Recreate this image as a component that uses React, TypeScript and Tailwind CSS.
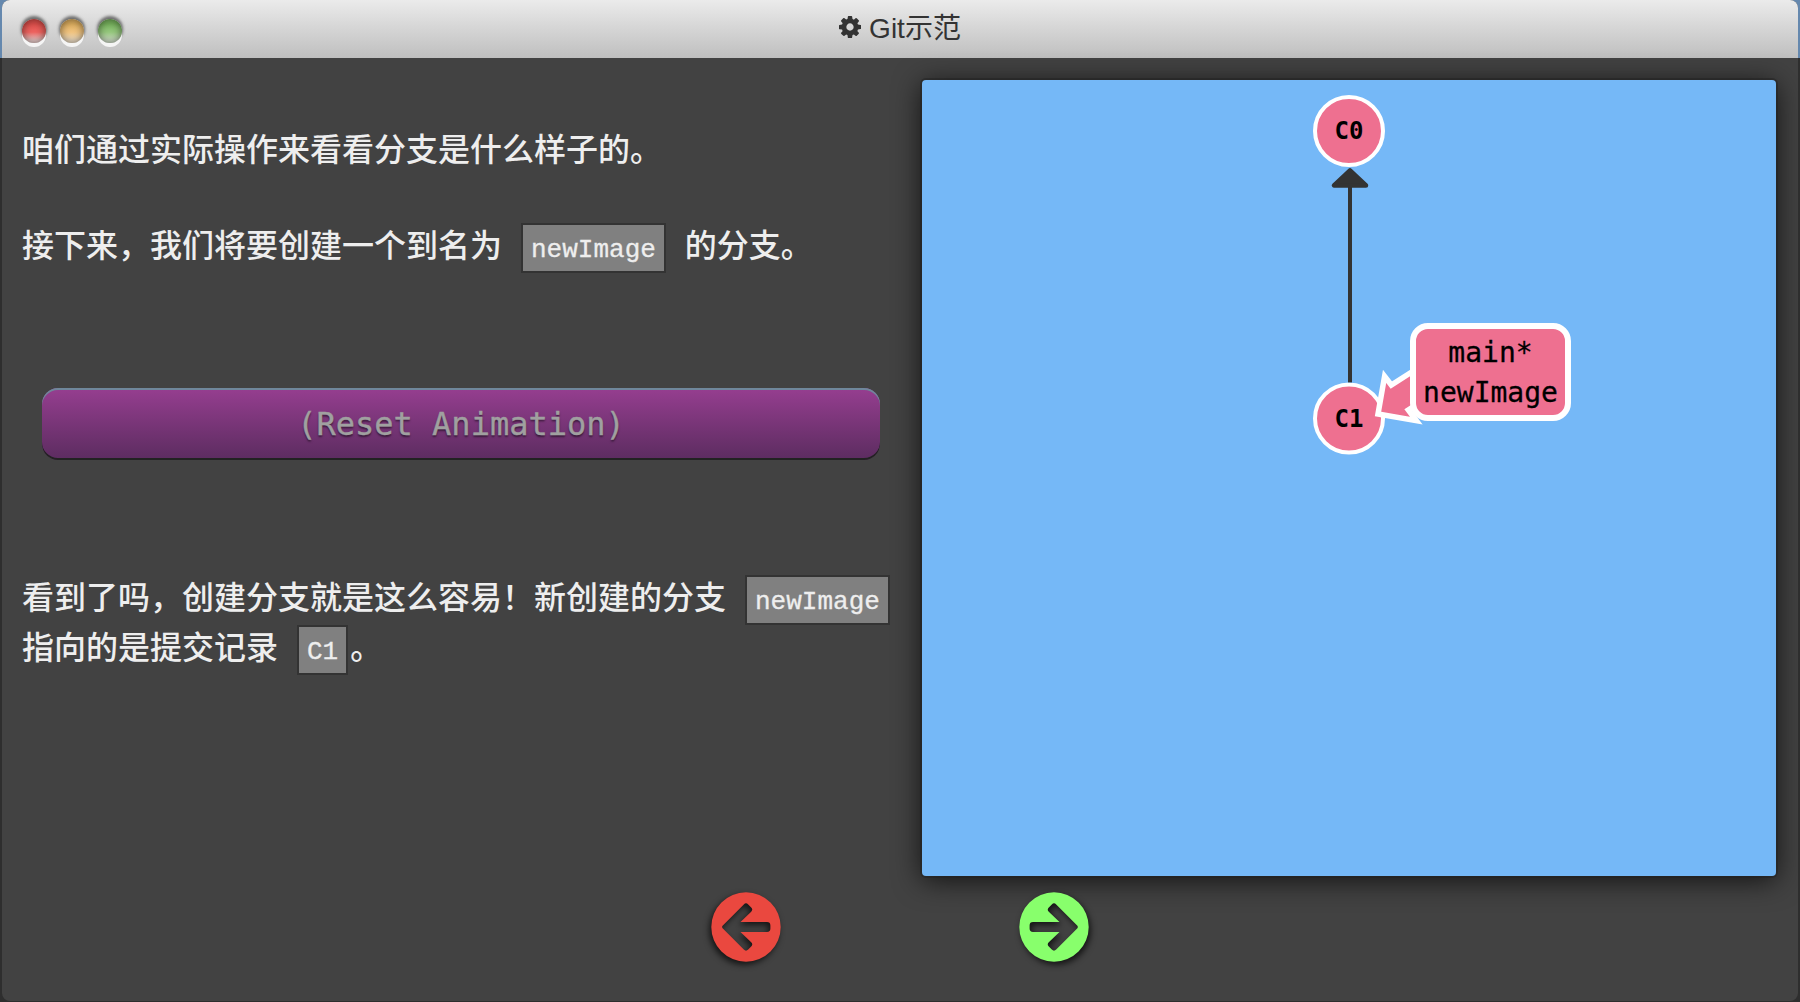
import type { ReactNode } from "react";

const GEAR =
  "M1024 896q0 -106 -75 -181t-181 -75t-181 75t-75 181t75 181t181 75t181 -75t75 -181zM1536 1007v-222q0 -12 -8 -23t-20 -13l-185 -28q-19 -54 -39 -91q35 -50 107 -138q10 -12 10 -25t-9 -23q-27 -37 -99 -108t-94 -71q-12 0 -26 9l-138 108q-44 -23 -91 -38q-16 -136 -29 -186q-7 -28 -36 -28h-222q-14 0 -24.5 8.5t-11.5 21.5l-28 184q-49 16 -90 37l-141 -107q-10 -9 -25 -9q-14 0 -25 11q-126 114 -165 168q-7 10 -7 23q0 12 8 23q15 21 51 66.5t54 70.5q-27 50 -41 99l-183 27q-13 2 -21 12.5t-8 23.5v222q0 12 8 23t19 13l186 28q14 46 39 92q-40 57 -107 138q-10 12 -10 24q0 10 9 23q26 36 98.5 107.5t94.5 71.5q13 0 26 -10l138 -107q44 23 91 38q16 136 29 186q7 28 36 28h222q14 0 24.5 -8.5t11.5 -21.5l28 -184q49 -16 90 -37l142 107q9 9 24 9q13 0 25 -10q129 -119 165 -170q7 -8 7 -22q0 -12 -8 -23q-15 -21 -51 -66.5t-54 -70.5q26 -50 41 -98l183 -28q13 -2 21 -12.5t8 -23.5z";

function Light({ color }: { color: string }) {
  return (
    <span
      className={`h-6 w-6 rounded-full shadow-[inset_0_0_8px_rgba(0,0,0,0.55),0_4px_0_#f5f5f5,0_-2px_3px_1px_rgba(90,90,90,0.85)] ${color}`}
    />
  );
}

function Code({ children, className }: { children: ReactNode; className: string }) {
  return (
    <code
      className={`relative top-[2px] inline-block h-[50px] border-2 border-[#333333] bg-[#808080] px-2 align-top font-['Liberation_Mono',monospace] text-[26px] leading-[50px] [-webkit-text-stroke:0.3px_#eeeeee] ${className}`}
    >
      {children}
    </code>
  );
}

function CircleArrow({ flip, color, shadow }: { flip?: boolean; color: string; shadow: string }) {
  return (
    <svg width="70" height="70" viewBox="-35 -35 70 70" className={`overflow-visible ${color} ${shadow}`}>
      <path
        transform={flip ? "scale(-1 1)" : undefined}
        fill="currentColor"
        fillRule="evenodd"
        d="M0 -34.7A34.7 34.7 0 1 1 0 34.7A34.7 34.7 0 1 1 0 -34.7ZM-23.4 -1.2L-2.2 -22.6Q0 -24.8 2.2 -22.6L5.2 -19.6Q7.3 -17.4 5.2 -15.2L-5.5 -4.9H21Q24.4 -4.9 24.4 -1.5V1.5Q24.4 4.9 21 4.9H-5.5L5.2 15.2Q7.3 17.4 5.2 19.6L2.2 22.6Q0 24.8 -2.2 22.6L-23.4 1.2Q-24.4 0 -23.4 -1.2Z"
      />
    </svg>
  );
}

function CommitTree() {
  return (
    <svg width="854" height="796" viewBox="922 80 854 796" className="block">
      <g fill="#ee7090" stroke="#ffffff" strokeWidth="4">
        <circle cx="1349" cy="131" r="34" />
        <circle cx="1349" cy="418.5" r="34" />
      </g>
      <path d="M1350 382.4V186" stroke="#333333" strokeWidth="4" />
      <path
        d="M1350 170.3L1334 185.5H1366Z"
        fill="#333333"
        stroke="#333333"
        strokeWidth="4.5"
        strokeLinejoin="round"
      />
      <g
        fill="#000000"
        fontFamily="'DejaVu Sans Mono', monospace"
        fontSize="24"
        fontWeight="700"
        textAnchor="middle"
      >
        <text x="1349" y="139">C0</text>
        <text x="1349" y="427">C1</text>
      </g>
      <path
        d="M1416 369.3L1391.3 385L1384.6 376.3L1378 414L1416.3 420.7L1408.3 410L1416 405"
        fill="#ee7090"
        stroke="#ffffff"
        strokeWidth="5.5"
        strokeMiterlimit="10"
      />
      <rect x="1413" y="326" width="155" height="92" rx="15" fill="#ee7090" stroke="#ffffff" strokeWidth="6" />
      <g
        fill="#000000"
        stroke="#000000"
        strokeWidth="0.3"
        fontFamily="'DejaVu Sans Mono', monospace"
        fontSize="28"
        textAnchor="middle"
      >
        <text x="1490.5" y="362">main*</text>
        <text x="1490.5" y="402">newImage</text>
      </g>
    </svg>
  );
}

export default function App() {
  return (
    <div className="h-[1002px] w-[1800px] overflow-hidden bg-[linear-gradient(#6588ae_58px,#2e2e2e_58px)] px-[2px] pb-[1px] font-['Liberation_Sans','Noto_Sans_CJK_SC',sans-serif]">
      <div className="flex h-full flex-col overflow-hidden rounded-[8px] bg-[#424242]">
        <header className="grid h-[58px] shrink-0 grid-cols-[1fr_auto_1fr] bg-linear-to-b from-[#ebebeb] to-[#bfbfbf]">
          <div className="flex gap-[14px] pt-[19px] pl-5">
            <Light color="bg-[linear-gradient(#e0504c_20%,#ee6460_55%,#efd0ce_90%)]" />
            <Light color="bg-[linear-gradient(#e0b060_20%,#f1c480_55%,#f3e2c8_90%)]" />
            <Light color="bg-[linear-gradient(#78b45e_20%,#96c87e_55%,#d3e3ca_90%)]" />
          </div>
          <h1 className="flex items-center gap-2 text-[28px] leading-[56px] text-[#333333]">
            <svg width="22" height="22" viewBox="0 128 1536 1536" fill="currentColor" className="-mt-1">
              <path fillRule="evenodd" d={GEAR} />
            </svg>
            <span>Git示范</span>
          </h1>
        </header>

        <main className="flex pt-[22px] pl-5">
          <section className="w-[900px] pt-[45px] text-[32px] leading-[50px] font-medium text-[#eeeeee]">
            <p className="h-[96px] whitespace-nowrap">咱们通过实际操作来看看分支是什么样子的。</p>
            <p className="whitespace-nowrap">
              接下来，我们将要创建一个到名为
              <Code className="mx-[19px]">newImage</Code>
              的分支。
            </p>
            <button className="mt-[117px] ml-5 block h-[72px] w-[838px] rounded-[16px] bg-linear-to-b from-[#963e90] to-[#5c2c60] text-center font-['DejaVu_Sans_Mono',monospace] text-[32px] leading-[69px] font-normal text-[#a0a0a0] shadow-[inset_0_2px_0_#6f879b,inset_0_-2px_0_#222222] [-webkit-text-stroke:0.4px_#a0a0a0] [text-shadow:0_2px_2px_rgba(0,0,0,0.5)]">
              (Reset Animation)
            </button>
            <p className="mt-[113px] whitespace-nowrap">
              看到了吗，创建分支就是这么容易！新创建的分支
              <Code className="ml-[19px]">newImage</Code>
              <br />
              指向的是提交记录
              <Code className="mr-[2px] ml-[19px]">C1</Code>。
            </p>
          </section>
          <section className="h-[796px] w-[854px] shrink-0 rounded-[4px] bg-[#75b8f7] shadow-[0_0_0_2px_rgba(34,34,34,0.5),0_4px_28px_rgba(0,0,0,0.75)]">
            <CommitTree />
          </section>
        </main>

        <nav className="flex justify-center gap-[238px] pt-4">
          <CircleArrow color="text-[#ea483f]" shadow="drop-shadow-[-2px_3px_3px_rgba(0,0,0,0.7)]" />
          <CircleArrow flip color="text-[#88ff6c]" shadow="drop-shadow-[2px_3px_3px_rgba(0,0,0,0.7)]" />
        </nav>
      </div>
    </div>
  );
}
